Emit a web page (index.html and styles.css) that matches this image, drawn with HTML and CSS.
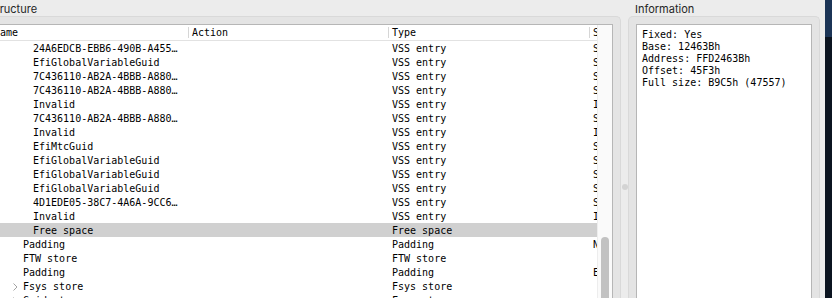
FILE: index.html
```html
<!DOCTYPE html>
<html lang="en">
<head>
  <meta charset="UTF-8">
  <meta name="viewport" content="width=device-width, initial-scale=1.0">
  <title>UEFITool</title>
  <link rel="stylesheet" href="styles.css">
</head>
<body>

<div class="window">
  <div class="pane structure">
    <div class="pane-title">Structure</div>
    <div class="group">
      <div class="tree">
        <div class="tree-view">
          <div class="tree-header">
            <div class="head first">Name</div>
            <div class="head">Action</div>
            <div class="head">Type</div>
            <div class="head">Subtype</div>
          </div>

          <div class="row lvl3">
            <div class="name"><span class="exp"></span>24A6EDCB-EBB6-490B-A455…</div>
            <div class="cell"></div><div class="cell">VSS entry</div><div class="cell">Standard</div>
          </div>
          <div class="row lvl3">
            <div class="name"><span class="exp"></span>EfiGlobalVariableGuid</div>
            <div class="cell"></div><div class="cell">VSS entry</div><div class="cell">Standard</div>
          </div>
          <div class="row lvl3">
            <div class="name"><span class="exp"></span>7C436110-AB2A-4BBB-A880…</div>
            <div class="cell"></div><div class="cell">VSS entry</div><div class="cell">Standard</div>
          </div>
          <div class="row lvl3">
            <div class="name"><span class="exp"></span>7C436110-AB2A-4BBB-A880…</div>
            <div class="cell"></div><div class="cell">VSS entry</div><div class="cell">Standard</div>
          </div>
          <div class="row lvl3">
            <div class="name"><span class="exp"></span>Invalid</div>
            <div class="cell"></div><div class="cell">VSS entry</div><div class="cell">Invalid</div>
          </div>
          <div class="row lvl3">
            <div class="name"><span class="exp"></span>7C436110-AB2A-4BBB-A880…</div>
            <div class="cell"></div><div class="cell">VSS entry</div><div class="cell">Standard</div>
          </div>
          <div class="row lvl3">
            <div class="name"><span class="exp"></span>Invalid</div>
            <div class="cell"></div><div class="cell">VSS entry</div><div class="cell">Invalid</div>
          </div>
          <div class="row lvl3">
            <div class="name"><span class="exp"></span>EfiMtcGuid</div>
            <div class="cell"></div><div class="cell">VSS entry</div><div class="cell">Standard</div>
          </div>
          <div class="row lvl3">
            <div class="name"><span class="exp"></span>EfiGlobalVariableGuid</div>
            <div class="cell"></div><div class="cell">VSS entry</div><div class="cell">Standard</div>
          </div>
          <div class="row lvl3">
            <div class="name"><span class="exp"></span>EfiGlobalVariableGuid</div>
            <div class="cell"></div><div class="cell">VSS entry</div><div class="cell">Standard</div>
          </div>
          <div class="row lvl3">
            <div class="name"><span class="exp"></span>EfiGlobalVariableGuid</div>
            <div class="cell"></div><div class="cell">VSS entry</div><div class="cell">Standard</div>
          </div>
          <div class="row lvl3">
            <div class="name"><span class="exp"></span>4D1EDE05-38C7-4A6A-9CC6…</div>
            <div class="cell"></div><div class="cell">VSS entry</div><div class="cell">Standard</div>
          </div>
          <div class="row lvl3">
            <div class="name"><span class="exp"></span>Invalid</div>
            <div class="cell"></div><div class="cell">VSS entry</div><div class="cell">Invalid</div>
          </div>
          <div class="row lvl3 selected">
            <div class="name"><span class="exp"></span>Free space</div>
            <div class="cell"></div><div class="cell">Free space</div><div class="cell"></div>
          </div>
          <div class="row">
            <div class="name"><span class="exp"></span>Padding</div>
            <div class="cell"></div><div class="cell">Padding</div><div class="cell">Non-empty</div>
          </div>
          <div class="row">
            <div class="name"><span class="exp"></span>FTW store</div>
            <div class="cell"></div><div class="cell">FTW store</div><div class="cell"></div>
          </div>
          <div class="row">
            <div class="name"><span class="exp"></span>Padding</div>
            <div class="cell"></div><div class="cell">Padding</div><div class="cell">Empty (0xFF)</div>
          </div>
          <div class="row">
            <div class="name"><span class="exp"><svg width="5" height="8" viewBox="0 0 5 8"><polyline points="0.5,0.5 4,4 0.5,7.5" fill="none" stroke="#a3a3a3" stroke-width="1"/></svg></span>Fsys store</div>
            <div class="cell"></div><div class="cell">Fsys store</div><div class="cell"></div>
          </div>
          <div class="row">
            <div class="name"><span class="exp"><svg width="5" height="8" viewBox="0 0 5 8"><polyline points="0.5,0.5 4,4 0.5,7.5" fill="none" stroke="#a3a3a3" stroke-width="1"/></svg></span>Gaid store</div>
            <div class="cell"></div><div class="cell">Fsys store</div><div class="cell"></div>
          </div>
        </div>
        <div class="scrollbar"><div class="thumb"></div></div>
      </div>
    </div>
  </div>

  <div class="splitter"><div class="handle"></div></div>

  <div class="pane info">
    <div class="pane-title">Information</div>
    <div class="group">
<pre class="info-text">Fixed: Yes
Base: 12463Bh
Address: FFD2463Bh
Offset: 45F3h
Full size: B9C5h (47557)</pre>
    </div>
  </div>
</div>
<div class="desktop"></div>

</body>
</html>
```

FILE: styles.css
```css
body {
  margin: 0;
  width: 832px;
  height: 298px;
  overflow: hidden;
  display: flex;
  background-color: #ececec;
  font-family: 'DejaVu Sans Mono', monospace;
  font-size: 10px;
  color: #000;
}

.window {
  flex: none;
  width: 825px;
  height: 100%;
  display: flex;
}

.pane {
  flex: none;
  display: flex;
  flex-direction: column;
}

.structure {
  width: 642px;
  margin-left: -21px;
}

.info {
  width: 192px;
}

.pane-title {
  height: 16px;
  line-height: 18px;
  padding-left: 7px;
  font-family: Inter, sans-serif;
  font-size: 11px;
  color: #262626;
}

.structure .pane-title {
  padding-left: 10px;
}

.group {
  flex: 1;
  min-height: 0;
  display: flex;
  padding: 7px 7px 0;
  background-color: #e4e4e4;
  border: 1px solid #d9d9d9;
  border-bottom: none;
  border-radius: 5px 5px 0 0;
}

/* tree */
.tree {
  flex: 1;
  min-width: 0;
  display: flex;
  background-color: #fff;
  border: 1px solid #b6b6b6;
  border-bottom: none;
}

.tree-view {
  flex: 1;
  min-width: 0;
  overflow: hidden;
}

.tree-header,
.row {
  display: grid;
  grid-template-columns: 200px 200px 201px 1fr;
}

.tree-header {
  border-bottom: 1px solid #e2e2e2;
}

.head {
  margin: 2px 0;
  height: 11px;
  line-height: 11px;
  padding-left: 3px;
  border-left: 1px solid #d6d6d6;
  white-space: nowrap;
  overflow: hidden;
}

.head.first {
  border-left: none;
  padding-left: 6px;
}

.row {
  height: 14px;
}

.row.selected {
  background-color: #d0d0d0;
}

.cell,
.name {
  box-sizing: border-box;
  height: 14px;
  padding-top: 1px;
  line-height: 14px;
  white-space: nowrap;
  overflow: hidden;
}

.cell {
  padding-left: 4px;
}

.name {
  display: flex;
  align-items: flex-start;
  padding-left: 25px;
}

.lvl3 .name {
  padding-left: 35px;
}

.exp {
  flex: none;
  width: 10px;
  height: 13px;
  display: flex;
  align-items: center;
}

.scrollbar {
  flex: none;
  width: 11px;
  padding-left: 3px;
  background-color: #fafafa;
  border-left: 1px solid #ededed;
}

.thumb {
  width: 8px;
  height: 80px;
  margin-top: 212px;
  border-radius: 4px;
  background-color: #c2c2c2;
}

/* splitter */
.splitter {
  flex: none;
  width: 7px;
  display: flex;
  justify-content: center;
}

.handle {
  width: 6px;
  height: 6px;
  margin-top: 184px;
  border-radius: 50%;
  background-color: #d3d3d3;
}

/* information */
.info-text {
  flex: 1;
  margin: 0;
  padding: 4px 5px;
  background-color: #fff;
  border: 1px solid #b6b6b6;
  border-bottom: none;
  font-family: 'DejaVu Sans Mono', monospace;
  font-size: 10px;
  line-height: 12px;
  color: #000;
}

.desktop {
  flex: 1;
  background: linear-gradient(#1b3456 0, #1b3456 37px, #0b1420 37px);
}
```
